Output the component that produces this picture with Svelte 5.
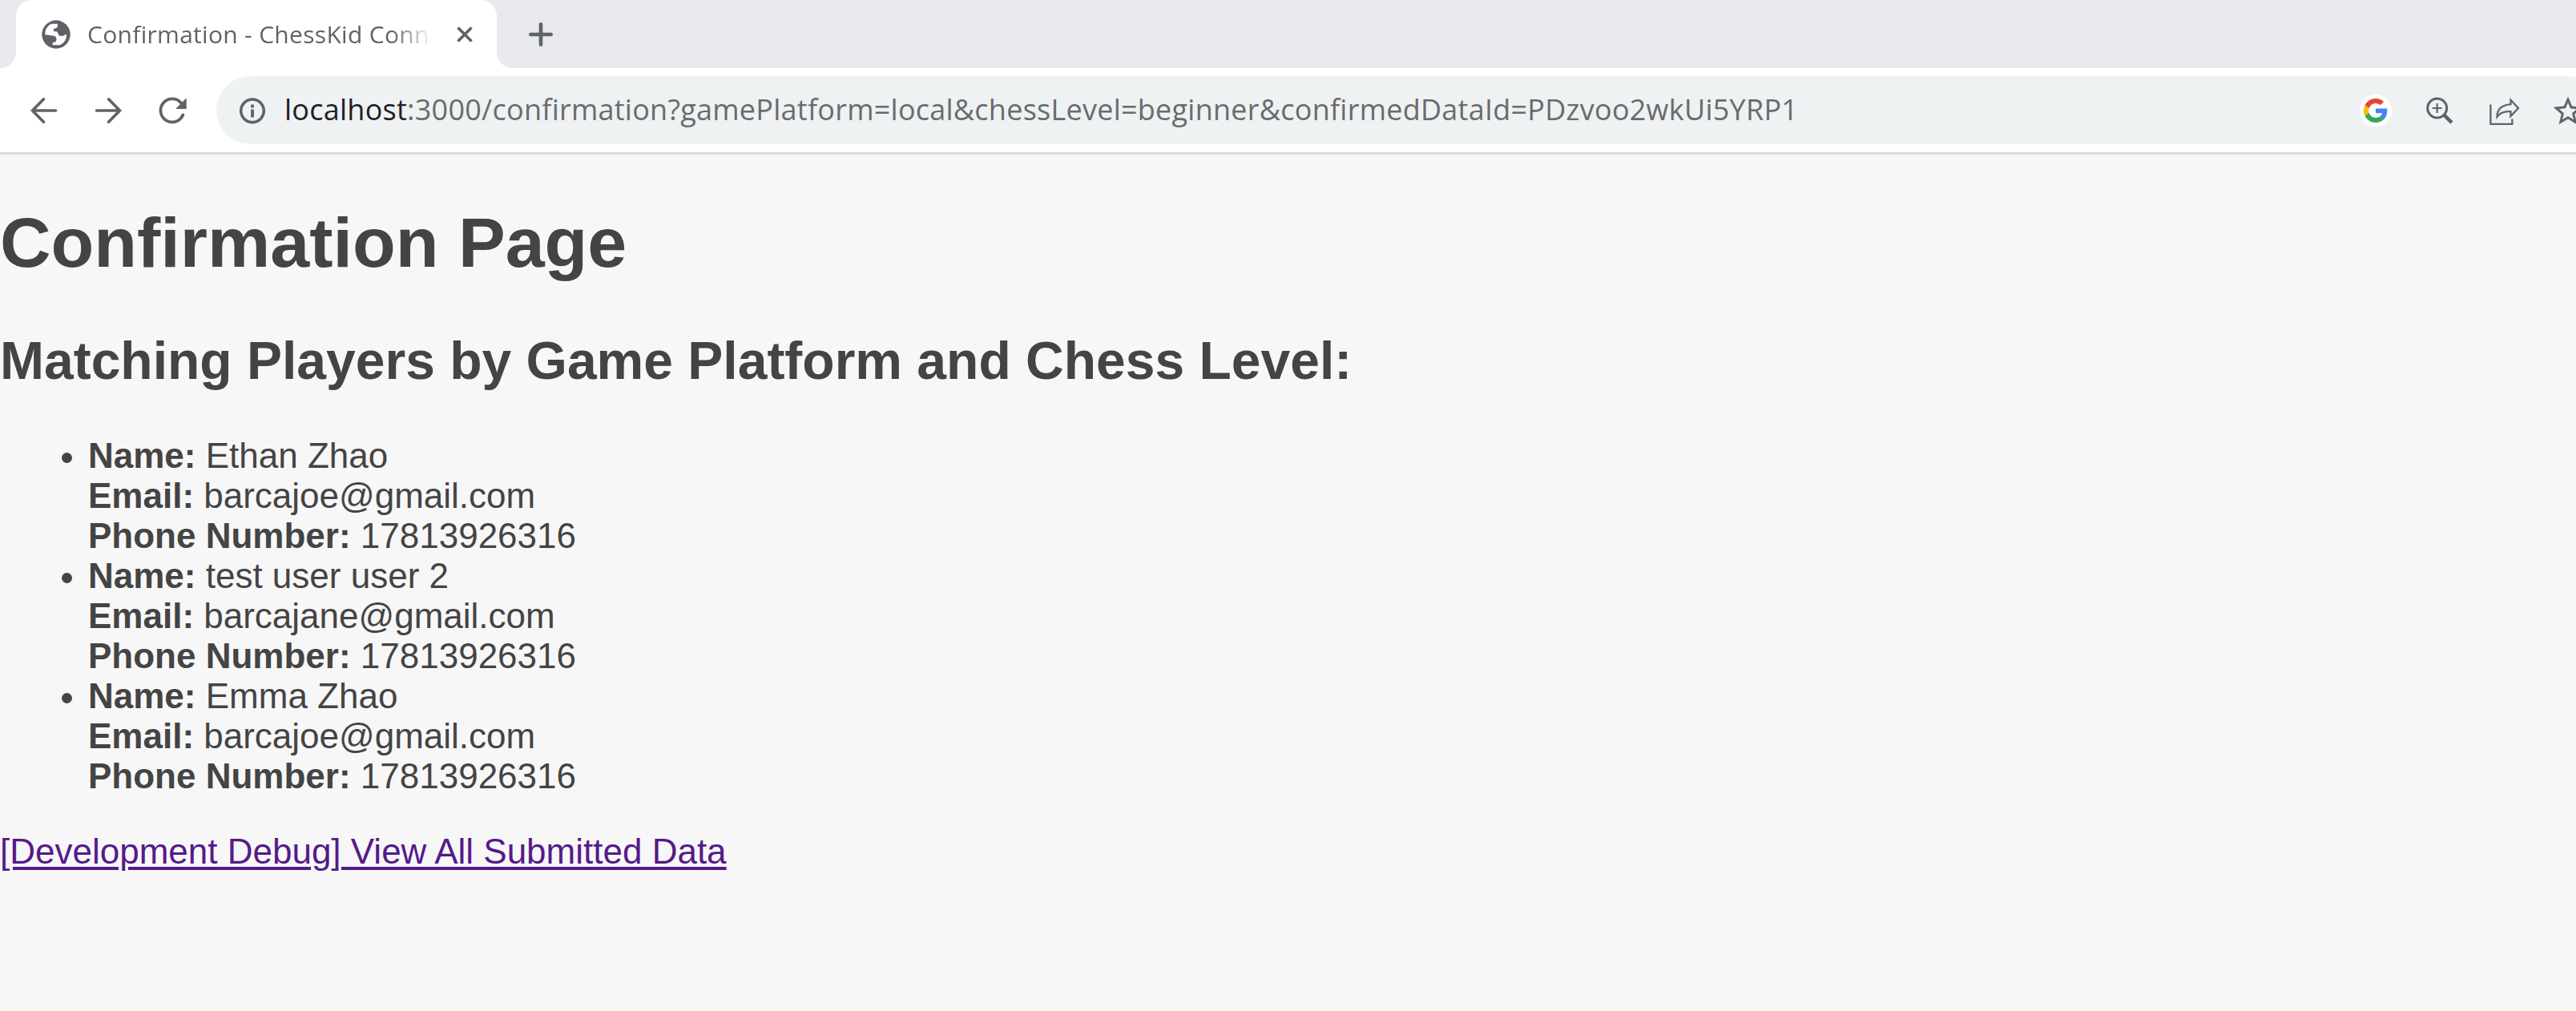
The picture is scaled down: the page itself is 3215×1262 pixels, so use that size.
<script>
  const players = [
    { name: 'Ethan Zhao', email: 'barcajoe@gmail.com', phone: '17813926316' },
    { name: 'test user user 2', email: 'barcajane@gmail.com', phone: '17813926316' },
    { name: 'Emma Zhao', email: 'barcajoe@gmail.com', phone: '17813926316' }
  ];
</script>

<div class="window">
  <div class="tabstrip">
    <div class="lead"></div>
    <div class="tab">
      <svg class="globe" viewBox="0 0 36 36"><circle cx="18" cy="18" r="17.700" fill="#5f6368"/><path d="M12 4.700H20V7.500Q19.500 10.500 15 10.700V14.300H18.300Q20.500 15 21 18.700Q25.700 21.500 30.300 17.700L31 18.700Q31 23 29 26Q26.500 30 22.700 31.300H13.700V27.700Q17.700 28 17.700 26.700Q19 24 18.300 22.700Q17.500 19.700 15 19.700L4.300 18.300Q4 14 5.700 10.700Q8 6.500 12 4.700z" fill="#fff"/></svg>
      <span class="title">Confirmation - ChessKid Conn</span>
      <svg class="close" viewBox="0 0 20 20"><path d="M1.500 1.500l17 17M18.500 1.500l-17 17" stroke="#5f6368" stroke-width="3.600"/></svg>
    </div>
    <div class="trail"></div>
    <svg class="plus" viewBox="0 0 30 30"><path d="M15 2.300v25.400M2.300 15h25.400" stroke="#5f6368" stroke-width="4.600" stroke-linecap="round"/></svg>
  </div>
  <div class="toolbar">
    <svg class="nav" viewBox="0 0 40 40"><path d="M34.500 20H5.500M19.500 5.800L5.500 20l14 14.200" fill="none" stroke="#5f6368" stroke-width="3.600" stroke-linecap="round"/></svg>
    <svg class="nav" viewBox="0 0 40 40"><path d="M5.500 20h29M20.500 5.800L34.500 20l-14 14.200" fill="none" stroke="#5f6368" stroke-width="3.600" stroke-linecap="round"/></svg>
    <svg class="nav" viewBox="0 0 40 40"><path d="M33.400 25.300A14.500 14.500 0 1 1 31 10.500" fill="none" stroke="#5f6368" stroke-width="3.700" stroke-linecap="round"/><path d="M37.700 4.300v13.700h-13.700z" fill="#5f6368"/></svg>
    <div class="address">
      <svg class="info" viewBox="0 0 34 34"><circle cx="17" cy="17.300" r="14.300" fill="none" stroke="#5f6368" stroke-width="3.600"/><path d="M17 15.600v9.800M17 9.400v4" stroke="#5f6368" stroke-width="3.800"/></svg>
      <span class="url"><b>localhost</b>:3000/confirmation?gamePlatform=local&amp;chessLevel=beginner&amp;confirmedDataId=PDzvoo2wkUi5YRP1</span>
      <div class="actions">
        <span class="google"><svg viewBox="0 0 48 48"><path fill="#ea4335" d="M24 9.500c3.540 0 6.710 1.220 9.210 3.600l6.850-6.850C35.900 2.380 30.470 0 24 0 14.620 0 6.510 5.380 2.560 13.220l7.980 6.190C12.430 13.720 17.740 9.500 24 9.500z"/><path fill="#4285f4" d="M46.980 24.550c0-1.570-.15-3.090-.38-4.550H24v9.020h12.940c-.58 2.960-2.260 5.480-4.780 7.180l7.730 6c4.510-4.180 7.090-10.360 7.090-17.650z"/><path fill="#fbbc05" d="M10.530 28.590c-.48-1.450-.76-2.990-.76-4.590s.27-3.140.76-4.590l-7.980-6.190C.92 16.460 0 20.120 0 24c0 3.880.92 7.540 2.560 10.780l7.970-6.190z"/><path fill="#34a853" d="M24 48c6.480 0 11.930-2.130 15.890-5.810l-7.730-6c-2.150 1.450-4.920 2.300-8.160 2.300-6.260 0-11.570-4.220-13.470-9.910l-7.980 6.190C6.510 42.620 14.620 48 24 48z"/></svg></span>
        <svg class="act" viewBox="0 0 40 40"><circle cx="16.700" cy="17" r="12" fill="none" stroke="#5f6368" stroke-width="3"/><path d="M16.700 11v12M10.700 17h12" stroke="#5f6368" stroke-width="2.200"/><path d="M25.500 25.700l9.500 9.500" stroke="#5f6368" stroke-width="4.500"/></svg>
        <svg class="act" viewBox="0 0 40 40"><path d="M3.400 12.500v24.300h27V30.500" fill="none" stroke="#5f6368" stroke-width="2.300"/><path d="M28.500 6.800L38 17l-9.500 10V21.200C21 20.500 15.500 22.500 11.500 27.800 11.500 18.500 18 13.200 28.500 12.200z" fill="none" stroke="#5f6368" stroke-width="2.300"/></svg>
        <svg class="act" viewBox="0 0 40 40"><path transform="translate(-2 -1.200) scale(1.833)" d="M22 9.240l-7.190-.62L12 2 9.190 8.630 2 9.240l5.460 4.730L5.820 21 12 17.270 18.180 21l-1.630-7.030L22 9.240zM12 15.400l-3.760 2.270 1-4.280-3.320-2.880 4.380-.38L12 6.100l1.710 4.040 4.380.38-3.320 2.880 1 4.280L12 15.400z" fill="#5f6368"/></svg>
      </div>
    </div>
  </div>
  <main>
    <h1>Confirmation Page</h1>
    <h2>Matching Players by Game Platform and Chess Level:</h2>
    <ul>
      {#each players as p}
        <li>
          <strong>Name:</strong> {p.name}<br />
          <strong>Email:</strong> {p.email}<br />
          <strong>Phone Number:</strong> {p.phone}
        </li>
      {/each}
    </ul>
    <a href="#all">[Development Debug] View All Submitted Data</a>
  </main>
</div>

<style>
  :global(body) { margin: 0; background: #f7f7f7; overflow: hidden; }
  svg { display: block; flex: none; }
  .window { width: 100%; height: 1262px; overflow: hidden; background: #f7f7f7; display: flex; flex-direction: column; }
  .tabstrip { height: 85px; flex: none; display: flex; align-items: stretch; background: #e8e9ed; font-family: "Open Sans", sans-serif; }
  .lead, .trail { width: 20px; flex: none; }
  .lead { background: radial-gradient(circle at 0 0, transparent 19.500px, #fff 20.500px) 0 65px / 20px 20px no-repeat; }
  .trail { background: radial-gradient(circle at 100% 0, transparent 19.500px, #fff 20.500px) 0 65px / 20px 20px no-repeat; }
  .tab { width: 600px; flex: none; box-sizing: border-box; padding: 0 30px 0 32px; display: flex; align-items: center; background: #fff; border-radius: 20px 20px 0 0; }
  .globe { width: 36px; height: 36px; }
  .title { margin-left: 21px; width: 431px; white-space: nowrap; font-size: 30px; line-height: 42px; letter-spacing: 0.3px; color: #5f6368; -webkit-mask-image: linear-gradient(90deg, #000 88%, transparent); mask-image: linear-gradient(90deg, #000 88%, transparent); }
  .close { width: 20px; height: 20px; margin-left: 30px; }
  .plus { width: 30px; height: 30px; align-self: center; margin-left: 20px; }
  .toolbar { height: 105px; flex: none; display: flex; align-items: center; padding-left: 35px; background: #fff; border-bottom: 3px solid #dadada; box-sizing: content-box; }
  .nav { width: 40px; height: 40px; margin-right: 40px; }
  .address { margin-left: -5px; width: 2977px; box-sizing: border-box; height: 85px; flex: none; border-radius: 43px; background: #eef2f3; display: flex; align-items: center; padding-left: 28px; }
  .info { width: 34px; height: 34px; }
  .url { margin-left: 23px; width: 2590px; padding-bottom: 2px; white-space: nowrap; font: 36px/50px "Open Sans", sans-serif; letter-spacing: 0.25px; color: #6a6b6c; }
  .url b { font-weight: 400; color: #202124; }
  .actions { display: flex; align-items: center; gap: 40px; }
  .google { width: 40px; height: 40px; border-radius: 50%; background: #fff; display: grid; place-items: center; }
  .google svg { width: 30px; height: 30px; }
  .act { width: 40px; height: 40px; }
  main { font: 44px/50px "Liberation Sans", Arial, sans-serif; color: #444; }
  h1 { margin: 60px 0 0; font-size: 88px; line-height: 100px; }
  h2 { margin: 60px 0 0; font-size: 66px; line-height: 75px; }
  ul { margin: 56px 0 44px; padding-left: 110px; }
  a { color: #551a8b; text-decoration-thickness: 4px; text-underline-offset: 4px; }
</style>
